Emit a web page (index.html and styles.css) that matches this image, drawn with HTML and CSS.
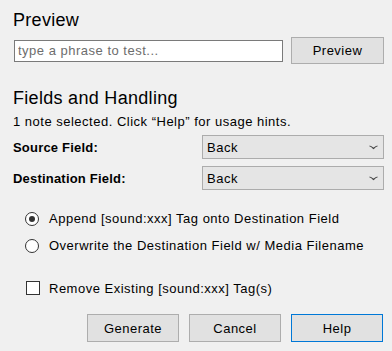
FILE: index.html
```html
<!DOCTYPE html>
<html lang="en">

<head>
    <meta charset="UTF-8">
    <title>Generate Audio</title>
    <link rel="stylesheet" href="styles.css">
</head>

<body>
    <div class="dialog">
        <h2 class="title">Preview</h2>
        <div class="preview-row">
            <input class="phrase" type="text" placeholder="type a phrase to test...">
            <button class="btn">Preview</button>
        </div>

        <h2 class="title second">Fields and Handling</h2>
        <p class="hint">1 note selected. Click &#8220;Help&#8221; for usage hints.</p>

        <div class="fields">
            <label class="field-label">Source Field:</label>
            <div class="combo"><span>Back</span>
                <svg class="arrow" width="9" height="5" viewBox="0 0 9 5"><path d="M0.5 1 Q2 1 4.5 3.5 Q7 1 8.5 1" fill="none" stroke="#444" stroke-width="1.2"/></svg>
            </div>
            <label class="field-label">Destination Field:</label>
            <div class="combo"><span>Back</span>
                <svg class="arrow" width="9" height="5" viewBox="0 0 9 5"><path d="M0.5 1 Q2 1 4.5 3.5 Q7 1 8.5 1" fill="none" stroke="#444" stroke-width="1.2"/></svg>
            </div>
        </div>

        <ul class="options">
            <li><span class="radio checked"></span>Append [sound:xxx] Tag onto Destination Field</li>
            <li><span class="radio"></span>Overwrite the Destination Field w/ Media Filename</li>
        </ul>

        <div class="check-row"><span class="check"></span>Remove Existing [sound:xxx] Tag(s)</div>

        <div class="actions">
            <button class="btn">Generate</button>
            <button class="btn">Cancel</button>
            <button class="btn default">Help</button>
        </div>
    </div>
</body>

</html>
```

FILE: styles.css
```css
* {
    margin: 0;
    padding: 0;
    box-sizing: border-box;
}

body {
    background: #f0f0f0;
    color: #000;
    font-family: "Liberation Sans", Arial, sans-serif;
    font-size: 13px;
    letter-spacing: 0.5px;
}

.dialog {
    padding: 9px 8px 0 13px;
}

.title {
    font-size: 18px;
    font-weight: normal;
    line-height: 22px;
    letter-spacing: 0.3px;
}

.title.second {
    margin-top: 23px;
}

.preview-row {
    display: flex;
    align-items: center;
    margin-top: 6px;
}

.phrase {
    width: 269px;
    height: 22px;
    margin-left: 1px;
    border: 1px solid #7a7a7a;
    background: #fff;
    padding: 0 3px;
    font: 13px "Liberation Sans", Arial, sans-serif;
    letter-spacing: 0.5px;
    outline: none;
}

.phrase::placeholder {
    color: #6d6d6d;
}

.btn {
    width: 93px;
    height: 27px;
    border: 1px solid #adadad;
    background: #e1e1e1;
    font: 13px "Liberation Sans", Arial, sans-serif;
    letter-spacing: 0.5px;
    color: #000;
}

.preview-row .btn {
    margin-left: 8px;
}

.hint {
    margin-top: 5px;
    line-height: 16px;
}

.fields {
    display: grid;
    grid-template-columns: 189px 182px;
    row-gap: 7px;
    align-items: center;
    margin-top: 5px;
}

.field-label {
    font-weight: bold;
    letter-spacing: 0.2px;
}

.combo {
    height: 24px;
    border: 1px solid #acacac;
    background: #e5e5e5;
    display: flex;
    align-items: center;
    justify-content: space-between;
    padding: 0 5px 0 4px;
}

.options {
    list-style: none;
    margin-top: 15px;
    margin-left: 12px;
}

.options li {
    display: flex;
    align-items: center;
    height: 27px;
}

.radio {
    width: 14px;
    height: 14px;
    border: 1px solid #333;
    border-radius: 50%;
    background: #fff;
    margin-right: 10px;
    position: relative;
}

.radio.checked::after {
    content: "";
    position: absolute;
    left: 3px;
    top: 3px;
    width: 6px;
    height: 6px;
    border-radius: 50%;
    background: #333;
}

.check-row {
    display: flex;
    align-items: center;
    height: 16px;
    margin-top: 21px;
    margin-left: 13px;
}

.check {
    width: 14px;
    height: 14px;
    border: 1px solid #333;
    background: #fff;
    margin-right: 9px;
}

.actions {
    display: flex;
    justify-content: flex-end;
    gap: 10px;
    margin-top: 18px;
    padding-right: 1px;
}

.actions .btn {
    width: 92px;
    height: 28px;
}

.actions .btn.default {
    border-color: #0078d7;
}
```
